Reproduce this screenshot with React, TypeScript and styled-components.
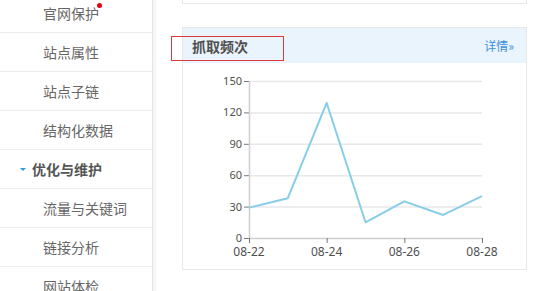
import styled, { createGlobalStyle } from "styled-components";

const GlobalStyle = createGlobalStyle`
  html, body {
    margin: 0;
    padding: 0;
    background: #fff;
    overflow: hidden;
    font-family: "Noto Sans CJK SC", "Noto Sans", sans-serif;
  }
`;

interface NavItem {
  name: string;
  group?: boolean;
  dot?: boolean;
}

const navItems: NavItem[] = [
  { name: "官网保护", dot: true },
  { name: "站点属性" },
  { name: "站点子链" },
  { name: "结构化数据" },
  { name: "优化与维护", group: true },
  { name: "流量与关键词" },
  { name: "链接分析" },
  { name: "网站体检" },
];

// 抓取频次 data, 08-22 ~ 08-28
const crawlData = [29, 38, 129, 15, 35, 22, 40];
const dayLabels = ["08-22", "08-24", "08-26", "08-28"];
const yTicks = [0, 30, 60, 90, 120, 150];

const X0 = 66;
const X1 = 299;
const Y_TOP = 18;
const Y_BOTTOM = 175;

const xAt = (i: number) => X0 + (i * (X1 - X0)) / 6;
const yAt = (v: number) => Y_BOTTOM - (v * (Y_BOTTOM - Y_TOP)) / 150;

const Page = styled.div`
  display: flex;
  height: 291px;
  overflow: hidden;
`;

const Sidebar = styled.ul`
  list-style: none;
  margin: -6px 0 0;
  padding: 0;
  width: 152px;
  flex-shrink: 0;
  border-right: 1px solid #e6e6e6;
  box-shadow: 3px 0 0 #f7f7f7;
`;

const NavRow = styled.li<{ $group?: boolean }>`
  display: flex;
  align-items: center;
  height: 38px;
  border-bottom: 1px solid #ececec;
  padding-left: ${(p) => (p.$group ? "20px" : "43px")};
  font-size: 14px;
  color: ${(p) => (p.$group ? "#555" : "#666")};
  font-weight: ${(p) => (p.$group ? 700 : 400)};
  cursor: pointer;
`;

const Caret = styled.span`
  width: 0;
  height: 0;
  border-left: 3px solid transparent;
  border-right: 3px solid transparent;
  border-top: 3px solid #2d9be3;
  margin-right: 6px;
`;

const Label = styled.span`
  position: relative;
`;

const RedDot = styled.span`
  position: absolute;
  right: -3px;
  top: 0;
  width: 5px;
  height: 5px;
  border-radius: 50%;
  background: #e60012;
`;

const Main = styled.div`
  padding-left: 29px;
  width: 345px;
`;

const PrevCard = styled.div`
  box-sizing: border-box;
  height: 31px;
  margin-top: -27px;
  border: 1px solid #e8e8e8;
  border-top: none;
`;

const Card = styled.div`
  box-sizing: border-box;
  margin-top: 23px;
  height: 243px;
  border: 1px solid #e8e8e8;
`;

const CardHeader = styled.div`
  position: relative;
  display: flex;
  align-items: center;
  justify-content: space-between;
  height: 35px;
  padding: 0 12px 0 9px;
  background: #eaf4fd;
`;

const Title = styled.span`
  font-size: 14px;
  font-weight: 700;
  color: #505050;
`;

const More = styled.a`
  font-size: 12px;
  color: #3a8fd9;
  text-decoration: none;
  cursor: pointer;
`;

const Highlight = styled.span`
  position: absolute;
  left: -12px;
  top: 8px;
  width: 111px;
  height: 23px;
  border: 1px solid #d9393f;
`;

const ChartSvg = styled.svg`
  display: block;
`;

const AxisText = styled.text<{ $size?: number }>`
  font-family: "Noto Sans", "Open Sans", sans-serif;
  font-size: ${(p) => p.$size ?? 11}px;
  fill: #505050;
`;

function CrawlChart() {
  const points = crawlData.map((v, i) => `${xAt(i)},${yAt(v)}`).join(" ");
  return (
    <ChartSvg width={343} height={205} viewBox="0 0 343 205">
      {yTicks.map((t) => (
        <g key={t}>
          {t > 0 && (
            <line x1={X0} x2={X1} y1={yAt(t) + 0.5} y2={yAt(t) + 0.5} stroke="#e8e8e8" strokeWidth={1.5} />
          )}
          <line x1={61} x2={X0} y1={yAt(t) + 0.5} y2={yAt(t) + 0.5} stroke="#777" strokeWidth={1} />
          <AxisText x={59} y={yAt(t) + 4} textAnchor="end">
            {t}
          </AxisText>
        </g>
      ))}
      <line x1={X0 + 0.5} x2={X0 + 0.5} y1={Y_TOP} y2={Y_BOTTOM + 1} stroke="#cfcfcf" strokeWidth={1.5} />
      <line x1={X0} x2={X1} y1={Y_BOTTOM + 0.5} y2={Y_BOTTOM + 0.5} stroke="#cfcfcf" strokeWidth={1.5} />
      {dayLabels.map((d, i) => {
        const x = xAt(i * 2);
        return (
          <g key={d}>
            <line x1={x + 0.5} x2={x + 0.5} y1={Y_BOTTOM} y2={Y_BOTTOM + 5} stroke="#777" strokeWidth={1} />
            <AxisText x={x} y={193} textAnchor="middle" $size={12}>
              {d}
            </AxisText>
          </g>
        );
      })}
      <polyline points={points} fill="none" stroke="#87cdea" strokeWidth={2} strokeLinejoin="round" />
    </ChartSvg>
  );
}

export default function App() {
  return (
    <>
      <GlobalStyle />
      <Page>
        <Sidebar>
          {navItems.map((item) => (
            <NavRow key={item.name} $group={item.group}>
              {item.group && <Caret />}
              <Label>
                {item.name}
                {item.dot && <RedDot />}
              </Label>
            </NavRow>
          ))}
        </Sidebar>
        <Main>
          <PrevCard />
          <Card>
            <CardHeader>
              <Title>抓取频次</Title>
              <More>详情»</More>
              <Highlight />
            </CardHeader>
            <CrawlChart />
          </Card>
        </Main>
      </Page>
    </>
  );
}
